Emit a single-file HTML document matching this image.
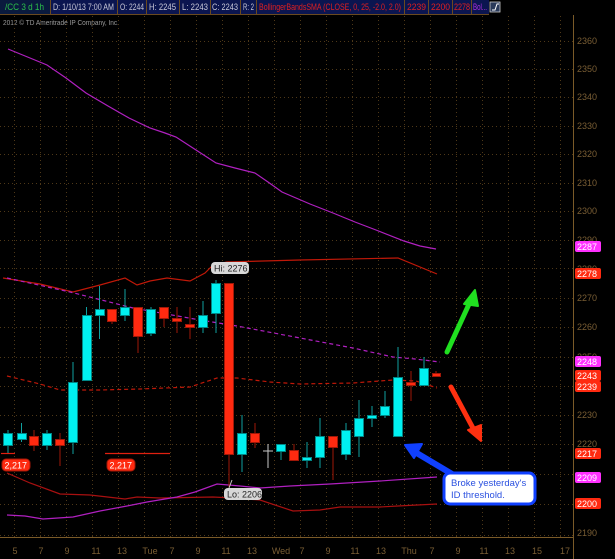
<!DOCTYPE html>
<html><head><style>
html,body{margin:0;padding:0;background:#000;width:615px;height:559px;overflow:hidden;font-family:"Liberation Sans",sans-serif}
</style></head><body>
<svg width="615" height="559" xmlns="http://www.w3.org/2000/svg" style="position:absolute;left:0;top:0">
<rect width="615" height="559" fill="#000"/>
<!-- header -->
<g font-size="9" font-family="Liberation Sans,sans-serif">
<rect x="0" y="0" width="489" height="14" fill="#0b1550"/>
<rect x="0" y="0" width="50" height="14" fill="#0a1a3e"/>
<g stroke="#6a4a20" stroke-width="1">
<line x1="50.5" y1="0" x2="50.5" y2="14"/><line x1="117.5" y1="0" x2="117.5" y2="14"/><line x1="146.5" y1="0" x2="146.5" y2="14"/><line x1="179.5" y1="0" x2="179.5" y2="14"/><line x1="210.5" y1="0" x2="210.5" y2="14"/><line x1="240.5" y1="0" x2="240.5" y2="14"/><line x1="256.5" y1="0" x2="256.5" y2="14"/><line x1="404.5" y1="0" x2="404.5" y2="14"/><line x1="428.5" y1="0" x2="428.5" y2="14"/><line x1="452.5" y1="0" x2="452.5" y2="14"/><line x1="471.5" y1="0" x2="471.5" y2="14"/>
</g>
<line x1="0" y1="14.5" x2="489" y2="14.5" stroke="#6a4a20"/>
<text x="5" y="10" fill="#2bc04a" textLength="39" lengthAdjust="spacingAndGlyphs">/CC 3 d 1h</text>
<text x="53" y="10" fill="#c8c8d8" textLength="61" lengthAdjust="spacingAndGlyphs">D: 1/10/13 7:00 AM</text>
<text x="120" y="10" fill="#c8c8d8" textLength="24" lengthAdjust="spacingAndGlyphs">O: 2244</text>
<text x="149" y="10" fill="#c8c8d8" textLength="27" lengthAdjust="spacingAndGlyphs">H: 2245</text>
<text x="182" y="10" fill="#c8c8d8" textLength="26" lengthAdjust="spacingAndGlyphs">L: 2243</text>
<text x="212" y="10" fill="#c8c8d8" textLength="26" lengthAdjust="spacingAndGlyphs">C: 2243</text>
<text x="243" y="10" fill="#c8c8d8" textLength="11" lengthAdjust="spacingAndGlyphs">R: 2</text>
<text x="259" y="10" fill="#e02020" textLength="142" lengthAdjust="spacingAndGlyphs">BollingerBandsSMA (CLOSE, 0, 25, -2.0, 2.0)</text>
<text x="407" y="10" fill="#e02020" textLength="19" lengthAdjust="spacingAndGlyphs">2239</text>
<text x="431" y="10" fill="#e02020" textLength="19" lengthAdjust="spacingAndGlyphs">2200</text>
<text x="454" y="10" fill="#e02020" textLength="16" lengthAdjust="spacingAndGlyphs">2278</text>
<text x="473" y="10" fill="#b030e0" textLength="14" lengthAdjust="spacingAndGlyphs">Bol...</text>
<rect x="490" y="2" width="10" height="10" fill="#2a3a5a" stroke="#ccc" stroke-width="0.8"/>
<path d="M492 10 L495 10 L497 4 L499 4" stroke="#fff" fill="none" stroke-width="1"/>
</g>
<text x="3" y="25" fill="#9a9a9a" font-size="7.5" textLength="116" lengthAdjust="spacingAndGlyphs">2012 © TD Ameritrade IP Company, Inc.</text>
<!-- grid -->
<g stroke="#4e3818" stroke-width="1" stroke-dasharray="1,3">
<line x1="14.5" y1="16" x2="14.5" y2="537"/><line x1="40.5" y1="16" x2="40.5" y2="537"/><line x1="66.5" y1="16" x2="66.5" y2="537"/><line x1="92.5" y1="16" x2="92.5" y2="537"/><line x1="118.5" y1="16" x2="118.5" y2="537"/><line x1="144.5" y1="16" x2="144.5" y2="537"/><line x1="170.5" y1="16" x2="170.5" y2="537"/><line x1="196.5" y1="16" x2="196.5" y2="537"/><line x1="222.5" y1="16" x2="222.5" y2="537"/><line x1="248.5" y1="16" x2="248.5" y2="537"/><line x1="274.5" y1="16" x2="274.5" y2="537"/><line x1="300.5" y1="16" x2="300.5" y2="537"/><line x1="326.5" y1="16" x2="326.5" y2="537"/><line x1="352.5" y1="16" x2="352.5" y2="537"/><line x1="378.5" y1="16" x2="378.5" y2="537"/><line x1="404.5" y1="16" x2="404.5" y2="537"/><line x1="430.5" y1="16" x2="430.5" y2="537"/><line x1="456.5" y1="16" x2="456.5" y2="537"/><line x1="482.5" y1="16" x2="482.5" y2="537"/><line x1="508.5" y1="16" x2="508.5" y2="537"/><line x1="534.5" y1="16" x2="534.5" y2="537"/><line x1="560.5" y1="16" x2="560.5" y2="537"/>
<line x1="0" y1="41.5" x2="573" y2="41.5"/><line x1="0" y1="69.5" x2="573" y2="69.5"/><line x1="0" y1="97.5" x2="573" y2="97.5"/><line x1="0" y1="126.5" x2="573" y2="126.5"/><line x1="0" y1="154.5" x2="573" y2="154.5"/><line x1="0" y1="183.5" x2="573" y2="183.5"/><line x1="0" y1="211.5" x2="573" y2="211.5"/><line x1="0" y1="240.5" x2="573" y2="240.5"/><line x1="0" y1="268.5" x2="573" y2="268.5"/><line x1="0" y1="298.5" x2="573" y2="298.5"/><line x1="0" y1="327.5" x2="573" y2="327.5"/><line x1="0" y1="357.5" x2="573" y2="357.5"/><line x1="0" y1="386.5" x2="573" y2="386.5"/><line x1="0" y1="415.5" x2="573" y2="415.5"/><line x1="0" y1="444.5" x2="573" y2="444.5"/><line x1="0" y1="474.5" x2="573" y2="474.5"/><line x1="0" y1="504.5" x2="573" y2="504.5"/><line x1="0" y1="535.5" x2="573" y2="535.5"/>
</g>
<!-- axes -->
<line x1="573.5" y1="15" x2="573.5" y2="559" stroke="#7a5a28"/>
<line x1="0" y1="537.5" x2="573" y2="537.5" stroke="#7a5a28"/>
<g fill="#7a5e34" font-size="9">
<text x="577" y="44">2360</text><text x="577" y="72">2350</text><text x="577" y="100">2340</text><text x="577" y="129">2330</text><text x="577" y="157">2320</text><text x="577" y="186">2310</text><text x="577" y="214">2300</text><text x="577" y="243">2290</text><text x="577" y="272">2280</text><text x="577" y="301">2270</text><text x="577" y="330">2260</text><text x="577" y="360">2250</text><text x="577" y="418">2230</text><text x="577" y="447">2220</text><text x="577" y="536">2190</text>
</g>
<g fill="#7a5e34" font-size="9" text-anchor="middle">
<text x="15" y="554">5</text><text x="41" y="554">7</text><text x="67" y="554">9</text><text x="96" y="554">11</text><text x="122" y="554">13</text><text x="150" y="554">Tue</text><text x="172" y="554">7</text><text x="198" y="554">9</text><text x="226" y="554">11</text><text x="252" y="554">13</text><text x="281" y="554">Wed</text><text x="302" y="554">7</text><text x="328" y="554">9</text><text x="355" y="554">11</text><text x="381" y="554">13</text><text x="409" y="554">Thu</text><text x="432" y="554">7</text><text x="458" y="554">9</text><text x="484" y="554">11</text><text x="510" y="554">13</text><text x="537" y="554">15</text><text x="565" y="554">17</text>
</g>
<!-- indicator lines -->
<g fill="none" stroke-width="1.2">
<polyline stroke="#b020c0" points="8,49 30,58 47,65 66,78 86,93 108,106 129,118 150,128 165,133 176,137 196,150 216,163 235,168 255,173 268,182 282,192 310,204 333,213 355,222 376,230 404,241 420,246 436,249"/>
<polyline stroke="#c01808" points="3,278 40,284 73,292 100,285 125,278 137,285 150,281 167,278 190,281 205,273 213,265 227,262 300,260 398,258 437,274"/>
<polyline stroke="#c01808" stroke-dasharray="4,3" points="7,376 40,384 60,390 100,390 140,389 190,387 205,382 217,378 237,378 270,382 300,384 353,383 393,380 416,381 437,388"/>
<polyline stroke="#b020c0" stroke-dasharray="4,3" points="7,278 70,292 133,308 200,320 237,326 300,338 353,348 393,357 415,359 440,362"/>
<polyline stroke="#a81010" points="7,473 30,483 60,494 90,495 125,499 137,497 160,498 213,497 233,498 260,500 293,511 320,510 340,507 380,507 398,506 437,504"/>
<polyline stroke="#b020c0" points="7,515 25,516 43,519 73,517 100,511 127,506 147,502 177,497 195,492 217,484 240,486 260,488 290,486 330,484 380,481 437,477"/>
</g>
<line x1="1" y1="453.5" x2="15" y2="453.5" stroke="#e02010" stroke-width="1.2"/>
<line x1="105" y1="453.5" x2="170" y2="453.5" stroke="#e02010" stroke-width="1.2"/>
<!-- candles -->
<g stroke-width="1">
<g stroke="#10a0a0">
<line x1="8" y1="430" x2="8" y2="453"/><line x1="21.5" y1="423" x2="21.5" y2="442"/><line x1="47" y1="430" x2="47" y2="450"/><line x1="73" y1="362" x2="73" y2="454"/><line x1="86.5" y1="307" x2="86.5" y2="380"/><line x1="99.5" y1="286" x2="99.5" y2="339"/><line x1="125" y1="289" x2="125" y2="321"/><line x1="151" y1="307" x2="151" y2="336"/><line x1="203" y1="301" x2="203" y2="333"/><line x1="216" y1="280" x2="216" y2="333"/><line x1="242" y1="415" x2="242" y2="472"/><line x1="281" y1="444" x2="281" y2="460"/><line x1="307" y1="442" x2="307" y2="468"/><line x1="320" y1="418" x2="320" y2="468"/><line x1="346" y1="423" x2="346" y2="460"/><line x1="359" y1="400" x2="359" y2="457"/><line x1="372" y1="406" x2="372" y2="427"/><line x1="385" y1="391" x2="385" y2="418"/><line x1="398" y1="347" x2="398" y2="436"/><line x1="424" y1="357" x2="424" y2="385"/>
</g>
<g stroke="#a01808">
<line x1="34" y1="430" x2="34" y2="451"/><line x1="60" y1="433" x2="60" y2="466"/><line x1="112" y1="309" x2="112" y2="324"/><line x1="138" y1="307" x2="138" y2="353"/><line x1="164" y1="307" x2="164" y2="327"/><line x1="177" y1="307" x2="177" y2="333"/><line x1="190" y1="307" x2="190" y2="339"/><line x1="229" y1="283" x2="229" y2="487"/><line x1="255" y1="423" x2="255" y2="448"/><line x1="294" y1="444" x2="294" y2="460"/><line x1="333" y1="436" x2="333" y2="480"/><line x1="411" y1="371" x2="411" y2="401"/><line x1="436" y1="371" x2="436" y2="377"/>
</g>
<line x1="268" y1="444" x2="268" y2="468" stroke="#c8c8c8"/><line x1="263" y1="451" x2="273" y2="451" stroke="#c8c8c8"/>
<g fill="#00f0f0" stroke="#008888">
<rect x="3.5" y="433.5" width="9" height="12"/><rect x="17.5" y="433.5" width="9" height="6"/><rect x="42.5" y="433.5" width="9" height="12"/><rect x="68.5" y="382.5" width="9" height="60"/><rect x="82.5" y="315.5" width="9" height="65"/><rect x="95.5" y="309.5" width="9" height="6"/><rect x="120.5" y="307.5" width="9" height="8"/><rect x="146.5" y="309.5" width="9" height="24"/><rect x="198.5" y="315.5" width="9" height="12"/><rect x="211.5" y="283.5" width="9" height="30"/><rect x="237.5" y="433.5" width="9" height="21"/><rect x="276.5" y="444.5" width="9" height="7"/><rect x="302.5" y="457.5" width="9" height="3"/><rect x="315.5" y="436.5" width="9" height="21"/><rect x="341.5" y="430.5" width="9" height="24"/><rect x="354.5" y="418.5" width="9" height="18"/><rect x="367.5" y="415.5" width="9" height="3"/><rect x="380.5" y="406.5" width="9" height="9"/><rect x="393.5" y="377.5" width="9" height="59"/><rect x="419.5" y="368.5" width="9" height="17"/>
</g>
<g fill="#ff2a10" stroke="#a01808">
<rect x="29.5" y="436.5" width="9" height="9"/><rect x="55.5" y="439.5" width="9" height="6"/><rect x="107.5" y="309.5" width="9" height="12"/><rect x="133.5" y="307.5" width="9" height="29"/><rect x="159.5" y="307.5" width="9" height="11"/><rect x="172.5" y="318.5" width="9" height="3"/><rect x="185.5" y="324.5" width="9" height="3"/><rect x="224.5" y="283.5" width="9" height="171"/><rect x="250.5" y="433.5" width="9" height="9"/><rect x="289.5" y="450.5" width="9" height="10"/><rect x="328.5" y="436.5" width="9" height="11"/><rect x="406.5" y="382.5" width="9" height="3"/><rect x="432.5" y="373.5" width="8" height="3"/>
</g>
</g>
<!-- hi/lo labels -->
<rect x="211" y="262" width="38" height="12" rx="4" fill="#d8d8d8"/>
<text x="214" y="271.5" font-size="9" fill="#222">Hi: 2276</text>
<line x1="229" y1="488" x2="232" y2="480" stroke="#ccc"/>
<rect x="224" y="488" width="38" height="12" rx="4" fill="#d8d8d8"/>
<text x="227" y="497.5" font-size="9" fill="#222">Lo: 2206</text>
<rect x="2" y="459" width="28" height="12" rx="4" fill="#ff2a10" stroke="#a01808"/>
<text x="4.5" y="468.5" font-size="9" fill="#fff">2,217</text>
<rect x="107" y="459" width="28" height="12" rx="4" fill="#ff2a10" stroke="#a01808"/>
<text x="109.5" y="468.5" font-size="9" fill="#fff">2,217</text>
<!-- right labels -->
<g font-size="9" fill="#fff">
<rect x="575" y="241" width="26" height="11" rx="2" fill="#ff30ff"/><text x="577" y="250">2287</text>
<rect x="575" y="268" width="26" height="11" rx="2" fill="#ff2a10"/><text x="577" y="277">2278</text>
<rect x="575" y="356" width="26" height="11" rx="2" fill="#ff30ff"/><text x="577" y="365">2248</text>
<rect x="575" y="370" width="26" height="11" rx="2" fill="#ff2a10"/><text x="577" y="379">2243</text>
<rect x="575" y="381" width="26" height="11" rx="2" fill="#ff2a10"/><text x="577" y="390">2239</text>
<rect x="575" y="448" width="26" height="11" rx="2" fill="#ff2a10"/><text x="577" y="457">2217</text>
<rect x="575" y="472" width="26" height="11" rx="2" fill="#ff30ff"/><text x="577" y="481">2209</text>
<rect x="575" y="498" width="26" height="11" rx="2" fill="#ff2a10"/><text x="577" y="507">2200</text>
</g>
<!-- arrows -->
<g stroke-linecap="round" stroke-linejoin="round">
<line x1="447" y1="352" x2="470" y2="302" stroke="#20e020" stroke-width="5"/>
<polygon points="475,290 464,304 478,306" fill="#20e020" stroke="#20e020" stroke-width="2"/>
<line x1="451" y1="387" x2="474" y2="430" stroke="#ff3010" stroke-width="5"/>
<polygon points="481,441 468,430 481,425" fill="#ff3010" stroke="#ff3010" stroke-width="2"/>
<line x1="452" y1="474" x2="415" y2="452" stroke="#1040ff" stroke-width="6"/>
<polygon points="405,445 422,444 414,458" fill="#1040ff" stroke="#1040ff" stroke-width="2"/>
</g>
<rect x="444" y="473" width="91" height="31" rx="6" fill="#fff" stroke="#1040ff" stroke-width="3"/>
<text x="451" y="486" font-size="9.5" fill="#2a50e0">Broke yesterday's</text>
<text x="451" y="498" font-size="9.5" fill="#2a50e0">ID threshold.</text>
</svg>
</body></html>
